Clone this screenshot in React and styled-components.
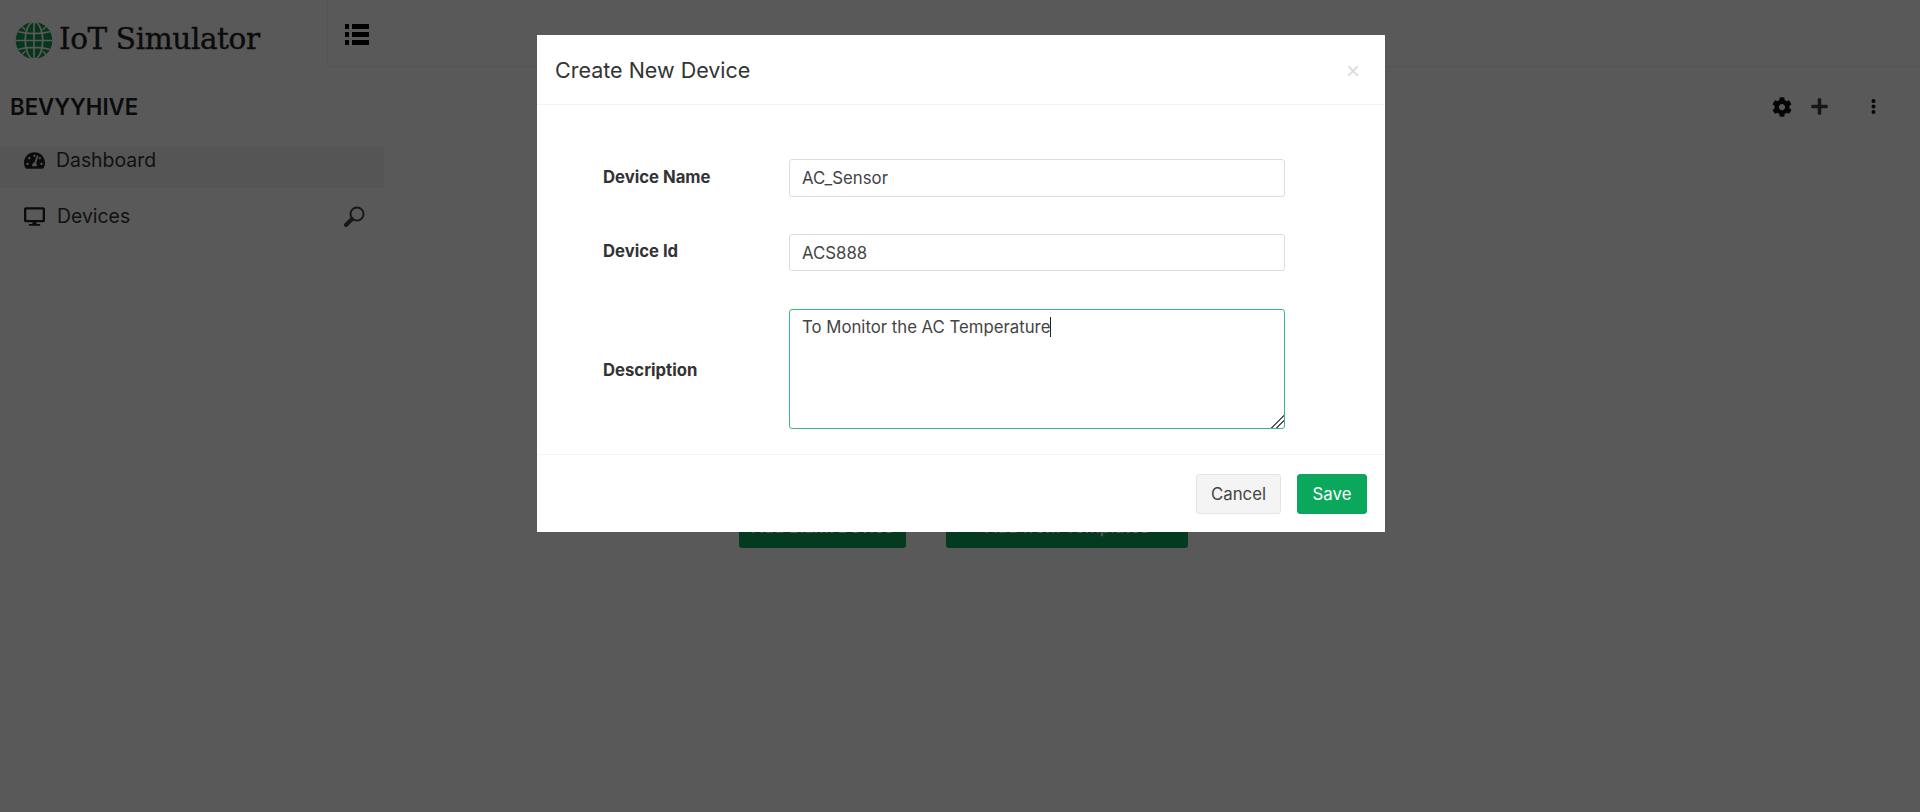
import React from "react";
import styled, { createGlobalStyle } from "styled-components";
import { FaCog, FaPlus, FaTachometerAlt, FaDesktop } from "react-icons/fa";

const Global = createGlobalStyle`
  html, body { margin: 0; padding: 0; height: 100%; background: #fff; overflow: hidden; }
  body { font-family: "Inter", "Liberation Sans", sans-serif; color: #333; }
  #root { height: 100%; }
  * { box-sizing: border-box; }
`;

const Page = styled.div`
  height: 812px;
  display: flex;
  flex-direction: column;
  background: #fff;
`;
const TopBar = styled.header`
  height: 67px;
  display: flex;
  flex: none;
`;
const Brand = styled.div`
  width: 328px;
  display: flex;
  align-items: center;
  gap: 6px;
  padding: 13px 0 0 15px;
  border-right: 1px solid #f2f2f2;
`;
const BrandName = styled.span`
  font-family: "DejaVu Serif", "Liberation Serif", serif;
  font-size: 29.5px;
  line-height: 1;
  color: #222;
  letter-spacing: -0.4px;
  white-space: nowrap;
  -webkit-text-stroke: 0.4px #222;
`;
const TopMain = styled.div`
  flex: 1;
  padding: 24px 0 0 17px;
  border-bottom: 1px solid #f2f2f2;
`;
const Heading = styled.div`
  height: 79px;
  flex: none;
  display: flex;
  align-items: center;
  justify-content: space-between;
  padding: 0 44px 0 10px;
`;
const Workspace = styled.h1`
  margin: 0;
  font-size: 22.2px;
  font-weight: 600;
  color: #222;
`;
const Tools = styled.div`
  display: flex;
  align-items: center;
`;
const ToolIcon = styled.span`
  display: inline-flex;
  margin-left: ${(p) => p.$gap}px;
  color: ${(p) => p.$color};
  font-size: ${(p) => p.$size}px;
`;
const Body = styled.div`
  flex: 1;
  display: flex;
`;
const Sidebar = styled.nav`
  width: 384px;
  flex: none;
`;
const NavRow = styled.div`
  height: ${(p) => p.$h}px;
  display: flex;
  align-items: center;
  padding: 0 19px ${(p) => p.$pb}px 24px;
  background: ${(p) => (p.$active ? "#f3f3f3" : "transparent")};
  color: #333;
  font-size: 19.4px;
`;
const NavIcon = styled.span`
  display: inline-flex;
  width: 21px;
  margin-right: ${(p) => p.$mr}px;
  font-size: 21px;
  color: #222;
`;
const NavEnd = styled.span`
  margin-left: auto;
  display: inline-flex;
`;
const Content = styled.main`
  flex: 1;
  padding: 362px 377px 0 0;
`;
const Actions = styled.div`
  display: flex;
  justify-content: center;
  gap: 40px;
`;
const Primary = styled.button`
  height: 40px;
  padding: 0 0 2px;
  border: 0;
  border-radius: 3px;
  background: #0aa75c;
  color: #fff;
  font: 500 17px "Inter", sans-serif;
  width: ${(p) => p.$w}px;
`;
const Backdrop = styled.div`
  position: fixed;
  inset: 0;
  background: rgba(0, 0, 0, 0.65);
  display: flex;
  justify-content: center;
  align-items: flex-start;
  padding: 35px 0 0 2px;
`;
const Modal = styled.div`
  width: 848px;
  height: 497px;
  background: #fff;
  display: flex;
  flex-direction: column;
`;
const ModalHeader = styled.div`
  height: 70px;
  flex: none;
  display: flex;
  align-items: center;
  justify-content: space-between;
  padding: 0 25px 0 18px;
  border-bottom: 1px solid #f4f4f4;
`;
const ModalTitle = styled.h2`
  margin: 1px 0 0;
  font-size: 21.5px;
  font-weight: 400;
  color: #333;
`;
const Close = styled.button`
  border: 0;
  background: none;
  padding: 0;
  margin-top: 2px;
  font: 400 24px/1 "Liberation Sans", sans-serif;
  color: #ddd;
`;
const Form = styled.form`
  flex: 1;
  display: flex;
  flex-direction: column;
  padding: 54px 100px 0 66px;
`;
const Row = styled.div`
  display: flex;
  align-items: ${(p) => (p.$top ? "center" : "flex-start")};
  margin-bottom: ${(p) => p.$mb}px;
`;
const Label = styled.label`
  width: 186px;
  flex: none;
  font-size: 16.7px;
  font-weight: 700;
  color: #333;
  padding-top: ${(p) => p.$pt}px;
`;
const Field = styled.input`
  width: 496px;
  height: ${(p) => p.$h}px;
  border: 1px solid #dcdcdc;
  border-radius: 3px;
  padding: 0 12px;
  font: 400 16.8px "Inter", sans-serif;
  color: #444;
  outline: none;
  background: #fff;
`;
const Area = styled.div`
  width: 496px;
  height: 120px;
  border: 1px solid #3fb57f;
  border-radius: 3px;
  padding: 5px 12px;
  font-size: 16.75px;
  line-height: 24px;
  color: #444;
  resize: both;
  overflow: auto;
  &::-webkit-resizer {
    background: linear-gradient(135deg,
      transparent 55%, #555 55%, #555 61%, transparent 61%,
      transparent 72%, #555 72%, #555 78%, transparent 78%);
  }
`;
const AreaText = styled.span`
  border-right: 1px solid #222;
`;
const ModalFooter = styled.div`
  height: 78px;
  flex: none;
  display: flex;
  align-items: center;
  justify-content: flex-end;
  gap: 16px;
  padding: 0 18px 0 0;
  border-top: 1px solid #f4f4f4;
`;
const Button = styled.button`
  height: 40px;
  width: ${(p) => p.$w}px;
  border-radius: 3px;
  border: 1px solid ${(p) => (p.$primary ? "#0aa75c" : "#e4e4e4")};
  background: ${(p) => (p.$primary ? "#0aa75c" : "#f4f4f4")};
  color: ${(p) => (p.$primary ? "#fff" : "#444")};
  font: 400 16.8px "Inter", sans-serif;
`;

const Globe = () => (
  <svg width="38" height="37" viewBox="0 0 38 38">
    <circle cx="19" cy="19" r="18.8" fill="#149a4e" />
    <g fill="none" stroke="#fff" strokeWidth="1.7">
      <ellipse cx="19" cy="19" rx="9" ry="19" />
      <path d="M19 0v38M0 19h38M3 10c9 2.5 23 2.5 32 0M3 28c9-2.5 23-2.5 32 0" />
      <path d="M5 3l5 5M33 3l-5 5M5 35l5-5M33 35l-5-5" strokeWidth="1.5" />
    </g>
  </svg>
);
const MenuGlyph = () => (
  <svg width="24" height="21" viewBox="0 0 24 21" fill="#000" style={{ display: "block" }}>
    <path d="M0 0h4v5H0zM7 0h17v5H7zM0 8h4v5H0zM7 8h17v5H7zM0 16h4v5H0zM7 16h17v5H7z" />
  </svg>
);
const Dots = () => (
  <svg width="5" height="15" viewBox="0 0 5 15" fill="#111">
    <circle cx="2.5" cy="2" r="2" /><circle cx="2.5" cy="7.5" r="2" /><circle cx="2.5" cy="13" r="2" />
  </svg>
);
const Lens = () => (
  <svg width="21" height="21" viewBox="0 0 21 21" fill="none" stroke="#444">
    <circle cx="13" cy="8" r="6.5" strokeWidth="2" />
    <path d="M8 13l-6 6" strokeWidth="4" strokeLinecap="round" />
  </svg>
);

export default function App() {
  return (
    <>
      <Global />
      <Page>
        <TopBar>
          <Brand><Globe /><BrandName>IoT Simulator</BrandName></Brand>
          <TopMain><MenuGlyph /></TopMain>
        </TopBar>
        <Heading>
          <Workspace>BEVYYHIVE</Workspace>
          <Tools>
            <ToolIcon $color="#111" $size={20}><FaCog /></ToolIcon>
            <ToolIcon $color="#444" $gap={18} $size={19}><FaPlus /></ToolIcon>
            <ToolIcon $gap={42}><Dots /></ToolIcon>
          </Tools>
        </Heading>
        <Body>
          <Sidebar>
            <NavRow $active $h={42} $pb={14}>
              <NavIcon $mr={11}><FaTachometerAlt /></NavIcon>Dashboard
            </NavRow>
            <NavRow $h={65} $pb={9}>
              <NavIcon $mr={12}><FaDesktop /></NavIcon>Devices
              <NavEnd><Lens /></NavEnd>
            </NavRow>
          </Sidebar>
          <Content>
            <Actions>
              <Primary $w={167}>Add Blank Device</Primary>
              <Primary $w={242}>Add from Templates</Primary>
            </Actions>
          </Content>
        </Body>
      </Page>
      <Backdrop>
        <Modal>
          <ModalHeader>
            <ModalTitle>Create New Device</ModalTitle>
            <Close type="button">×</Close>
          </ModalHeader>
          <Form>
            <Row $mb={37}>
              <Label $pt={8}>Device Name</Label>
              <Field readOnly value="AC_Sensor" $h={38} />
            </Row>
            <Row $mb={38}>
              <Label $pt={7}>Device Id</Label>
              <Field readOnly value="ACS888" $h={37} />
            </Row>
            <Row $top $mb={0}>
              <Label $pt={2}>Description</Label>
              <Area><AreaText>To Monitor the AC Temperature</AreaText></Area>
            </Row>
          </Form>
          <ModalFooter>
            <Button type="button" $w={85}>Cancel</Button>
            <Button type="button" $primary $w={70}>Save</Button>
          </ModalFooter>
        </Modal>
      </Backdrop>
    </>
  );
}
